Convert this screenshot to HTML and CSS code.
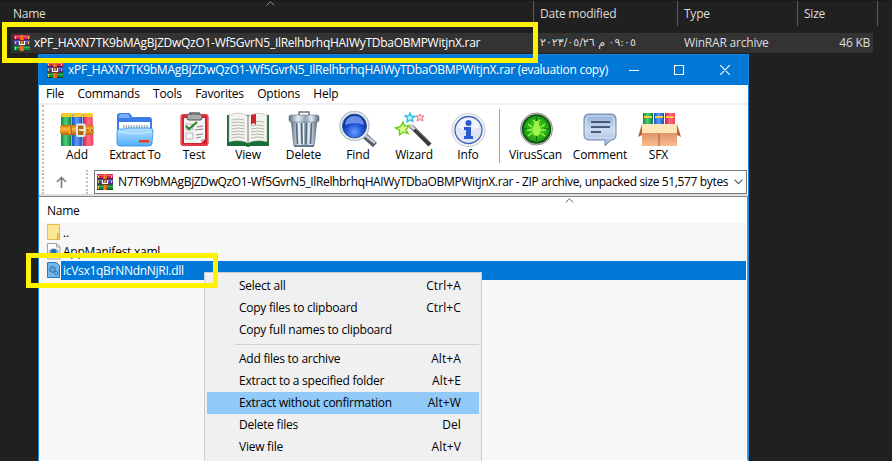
FILE: index.html
```
<!DOCTYPE html>
<html lang="en">
<head>
<meta charset="utf-8">
<title>WinRAR</title>
<link rel="stylesheet" href="styles.css">
</head>
<body>
<svg class="defs" width="0" height="0" aria-hidden="true">
  <defs>
    <linearGradient id="steel" x1="0" x2="1"><stop offset="0" stop-color="#5c7183"/><stop offset=".3" stop-color="#e9f0f5"/><stop offset=".55" stop-color="#8fa2b3"/><stop offset=".75" stop-color="#e0e8ef"/><stop offset="1" stop-color="#53677a"/></linearGradient>
    <linearGradient id="folder" x1="0" y1="0" x2="0" y2="1"><stop offset="0" stop-color="#b4e2ff"/><stop offset="1" stop-color="#51aef8"/></linearGradient>
    <linearGradient id="green" x1="0" x2="1"><stop offset="0" stop-color="#0c8a3c"/><stop offset=".45" stop-color="#4cd07a"/><stop offset="1" stop-color="#0b7f38"/></linearGradient>
    <linearGradient id="blue" x1="0" x2="1"><stop offset="0" stop-color="#1c50c8"/><stop offset=".45" stop-color="#5c9cf8"/><stop offset="1" stop-color="#1d4cc0"/></linearGradient>
    <linearGradient id="red" x1="0" x2="1"><stop offset="0" stop-color="#d81c40"/><stop offset=".5" stop-color="#ff6c88"/><stop offset="1" stop-color="#f03c60"/></linearGradient>
    <linearGradient id="leather" x1="0" y1="0" x2="0" y2="1"><stop offset="0" stop-color="#c86e08"/><stop offset=".4" stop-color="#ffb843"/><stop offset="1" stop-color="#b85c08"/></linearGradient>
    <linearGradient id="bubble" x1="0" y1="0" x2="0" y2="1"><stop offset="0" stop-color="#8eabd4"/><stop offset=".5" stop-color="#cddcf1"/><stop offset="1" stop-color="#9ab4dc"/></linearGradient>
    <linearGradient id="carton" x1="0" y1="0" x2="0" y2="1"><stop offset="0" stop-color="#d98c60"/><stop offset="1" stop-color="#f9bd90"/></linearGradient>
    <radialGradient id="lens" cy=".75"><stop offset="0" stop-color="#6b9dff"/><stop offset=".65" stop-color="#2458d8"/><stop offset="1" stop-color="#1238a8"/></radialGradient>
    <radialGradient id="radar"><stop offset="0" stop-color="#4be11c"/><stop offset="1" stop-color="#199a12"/></radialGradient>
    <symbol id="rar" viewBox="0 0 16 16">
      <path fill="#d4234f" d="M0 0h16v5H0z"/><path fill="#ec6383" d="M0 1h16v1H0z"/>
      <path fill="#4a42a0" d="M0 5h16v5H0z"/><path fill="#7870c8" d="M0 6h16v1H0z"/>
      <path fill="#138637" d="M0 10h16v6H0z"/><path fill="#3bb45b" d="M0 12h16v1H0z"/>
      <path fill="#501850" d="M0 4h16v1H0zM0 9.5h16v1H0z"/><path fill="#0b4a24" d="M0 15h16v1H0z"/>
      <path fill="#ffd23a" d="M1 2h1v2H1zM1 7h1v2H1zM1 12h1v3H1zM14 2h1v2h-1zM14 7h1v2h-1z"/>
      <path fill="#e25f16" d="M6 0h4v16H6z"/><path fill="#f58a35" d="M7 0h1v16H7z"/>
      <path fill="#7f3120" d="M5 5h6v6H5z"/><path fill="none" stroke="#fff" stroke-width="1.2" d="M5.500 6v3.500h5V6"/><path fill="#fff3c4" d="M7.500 6h1v3h-1z"/>
    </symbol>
  </defs>
</svg>

<main class="desktop">
  <section class="explorer">
    <header class="columns">
      <span class="col col-name">Name
        <svg class="sort" width="9" height="5" viewBox="0 0 9 5"><path d="M.7 4.4 4.5.8l3.8 3.6" fill="none" stroke="#9a9a9a"/></svg>
      </span>
      <span class="col">Date modified</span>
      <span class="col">Type</span>
      <span class="col">Size</span>
    </header>
    <div class="file-row">
      <span class="file"><svg class="rar" width="16" height="16"><use href="#rar"/></svg><span class="archive-name">xPF_HAXN7TK9bMAgBjZDwQzO1-Wf5GvrN5_IlRelhbrhqHAIWyTDbaOBMPWitjnX.rar</span></span>
      <span class="date"><bdo dir="ltr">٢٠٢٣/٠٥/٢٦ م ٠٩:٠٥</bdo></span>
      <span class="kind">WinRAR archive</span>
      <span class="size">46 KB</span>
    </div>
  </section>

  <section class="window">
    <header class="titlebar">
      <svg class="rar" width="16" height="16"><use href="#rar"/></svg>
      <h1 class="title">xPF_HAXN7TK9bMAgBjZDwQzO1-Wf5GvrN5_IlRelhbrhqHAIWyTDbaOBMPWitjnX.rar (evaluation copy)</h1>
      <svg class="controls" width="104" height="12" viewBox="0 0 104 12"><path d="M0 6.500h10M45.500 1.500h9v9h-9zM91.200 1.200l9.600 9.600M100.800 1.200l-9.600 9.600" fill="none" stroke="#fff" stroke-width="1.100"/></svg>
    </header>

    <nav class="menubar"><span>File</span><span>Commands</span><span>Tools</span><span>Favorites</span><span>Options</span><span>Help</span></nav>

    <div class="toolbar">
      <div class="tool"><svg width="44" height="38" viewBox="0 0 44 38">
        <path fill="url(#green)" d="M6 4h10.500v32H6z"/><path fill="url(#blue)" d="M17 4h10.500v32H17z"/><path fill="url(#red)" d="M28 4h9.500l1 31-2 1H28z"/>
        <path fill="#ffc928" d="M7 3h9l1 4H6zM18 3h9l1 4H17zM29 3h8l1 4H28z"/>
        <rect x="5" y="15" width="34" height="10" rx="3" fill="url(#leather)"/><path d="M14 13q5 7 0 14" stroke="#a45a0a" stroke-width="1" fill="#f6a830"/>
        <rect x="22" y="14.500" width="7.500" height="11.500" rx="1" fill="#b4670c" stroke="#e9edf0" stroke-width="2"/><path d="M24 20h5" stroke="#fff" stroke-width="1.600"/><path d="M32 20h1.500M36 20h1.500" stroke="#7c3e04" stroke-width="1.500"/></svg><span>Add</span></div>
      <div class="tool"><svg width="44" height="38" viewBox="0 0 44 38">
        <path fill="#3b7ce8" d="M4 6q0-3 3-3h8q3 0 4 4h17q3 0 3 3v22H4z"/><path fill="#76aff9" d="M6 6q0-2 2-2h6q2 0 3 4H6z"/>
        <path fill="#fff" d="M6 12h31v12H6z"/><path stroke="#a5b1bf" stroke-width="3" stroke-dasharray="1.400 1.200" d="M10 16.500h25"/>
        <path fill="url(#folder)" stroke="#2e8ceb" stroke-width=".8" d="M4 21q0-2 3-2h5l3-1h22q3 0 3 3l-1 12q0 3-3 3H7q-3 0-3-3z"/><path d="M6 22q15 3 33 0" stroke="#c9edff" fill="none"/><rect x="26" y="30" width="10" height="2.500" fill="#ed3e1b"/></svg><span class="tight">Extract To</span></div>
      <div class="tool"><svg width="44" height="38" viewBox="0 0 44 38">
        <rect x="8.500" y="4" width="28" height="32" rx="3" fill="#dc1f2d"/><rect x="9.500" y="5" width="26" height="30" rx="2" fill="none" stroke="#f4606c" stroke-width=".8"/><path fill="#f5f5f5" d="M12 8h21v21l-4 4H12z"/>
        <path fill="#c3c3c3" d="M33 29h-4v4z"/><rect x="15" y="4" width="15" height="6" rx="2" fill="#aaa" stroke="#555"/><path d="M18 5V3h9v2" stroke="#666" stroke-width="1.500" fill="none"/>
        <path d="M14 14h7v6h-7zM14 23h7v6h-7z" fill="none" stroke="#b6b6b6"/><path d="M14 16l3 3 8-7" stroke="#278936" stroke-width="2.300" fill="none"/><path d="M25 17l6-1M23 20l8-1M24 25l7-1M24 28l5-1" stroke="#868686"/></svg><span>Test</span></div>
      <div class="tool"><svg width="44" height="38" viewBox="0 0 44 38">
        <path fill="#176e36" d="M1 5h42v31H25l-3 1-3-1H1z"/><path fill="#f4f3ee" stroke="#9a9c91" stroke-width=".5" d="M3 5q10-4 19 1v27q-9-4-19-1zM41 5q-10-4-19 1v27q9-4 19-1z"/>
        <path d="M22 6v27" stroke="#b7b5ad" stroke-width="2"/><path d="M5.500 10q7-2 13 0M5.500 13q7-2 13 0M5.500 16q7-2 13 0M5.500 19q7-2 13 0M5.500 22q7-2 13 0M5.500 25q7-2 13 0M5.500 28q7-2 13 0M25 13q7-3 13-1M25 16q7-2 13 0M25 19q7-2 13 0M25 22q7-2 13 0M25 25q7-2 13 0M25 28q7-2 13 0" stroke="#a5a5a0" stroke-width=".8" fill="none"/><path fill="#cd2430" d="M25 5l5-1v11l-2.500-2-2.500 2z"/></svg><span>View</span></div>
      <div class="tool"><svg width="44" height="38" viewBox="0 0 44 38">
        <path d="M17 5V2h10v3" fill="none" stroke="#667888" stroke-width="1.500"/><path fill="url(#steel)" d="M9 12h26l-2 21q0 4-4 4H15q-4 0-4-4z"/>
        <path d="M14.500 13l1 21M19.500 13l.500 21M24.500 13l-.500 21M29.500 13l-1 21" stroke="#52677b" stroke-width="1.600"/><path d="M16.500 13l1 21M21.500 13v21M26.500 13l-.500 21" stroke="#e9f0f6" stroke-width="1"/>
        <rect x="7" y="5" width="30" height="7" rx="2" fill="url(#steel)" stroke="#627689" stroke-width=".6"/><path d="M12 36h20" stroke="#66798b" stroke-width="2"/></svg><span>Delete</span></div>
      <div class="tool"><svg width="44" height="38" viewBox="0 0 44 38">
        <path d="M29 26l10 9" stroke="#5a6068" stroke-width="6"/><path d="M29 25l10 8" stroke="#c5cbd1" stroke-width="2.500"/>
        <circle cx="18.500" cy="16" r="14.500" fill="#eef2f6" stroke="#b9c6d3" stroke-width="1.500"/><circle cx="18.500" cy="16" r="12" fill="url(#lens)" stroke="#31558f"/><path fill="#86aafa" opacity=".75" d="M9 15q1-9 9.500-9T28 15q-9-4-19 0z"/></svg><span>Find</span></div>
      <div class="tool"><svg width="44" height="38" viewBox="0 0 44 38">
        <path d="M19 16l19 19" stroke="#3a3a3a" stroke-width="4.500"/><path d="M20 15l19 18" stroke="#999" stroke-width="1"/><path d="M18.500 15.500l4 4" stroke="#d7d7d7" stroke-width="3"/>
        <path d="M11 12l1.500 4 5-.500-3.500 4 2 4-4.500-1.500-4 3v-5l-4-2 5-1.500z" fill="#d8ff94" stroke="#78ce25" stroke-width="1.500"/><path d="M18 3l1 3 4 .500-3 2 1 3-3-1.500-3 2 .500-4-2.500-2 4-.500z" fill="#baf8ff" stroke="#2cbce2" stroke-width="1.300"/><path d="M28 4l1 2h3l-2 2 1 3-3-1.500-3 1.500 1-3-2-2h3z" fill="#ffd7d7" stroke="#ed7a80"/></svg><span>Wizard</span></div>
      <div class="tool"><svg width="44" height="38" viewBox="0 0 44 38">
        <circle cx="22.500" cy="20" r="16.500" fill="#f5f5f5" stroke="#c8c8cc"/><circle cx="22.500" cy="20" r="13.500" fill="#dfe5f4" stroke="#3b62be" stroke-width="1.300"/><path d="M11 17q3-9 11.500-9T34 17q-12 5-23 0z" fill="#f1f3fa"/>
        <circle cx="22.500" cy="13" r="3" fill="#2c5bd0"/><path fill="#2c5bd0" d="M18 17h7v9h2v3h-9v-3h2v-6h-2z"/></svg><span>Info</span></div>
      <i class="tool-divider"></i>
      <div class="tool"><svg width="44" height="38" viewBox="0 0 44 38">
        <circle cx="22.500" cy="19" r="16" fill="#ddd" stroke="#8e8e8e"/><circle cx="22.500" cy="19" r="13.800" fill="url(#radar)" stroke="#135114" stroke-width="1.800"/><path d="M22.500 7v5M22.500 26v5M10 19h5M30 19h5" stroke="#156516"/>
        <ellipse cx="22.500" cy="20" rx="4.200" ry="6" fill="#a4f34b"/><circle cx="22.500" cy="13.500" r="2.500" fill="#a4f34b"/><path d="M18 17l-4-3M18 20h-5M18 23l-4 3M27 17l4-3M27 20h5M27 23l4 3M21 12l-2-2M24 12l2-2" stroke="#a4f34b" stroke-width="1.300"/></svg><span>VirusScan</span></div>
      <div class="tool"><svg width="44" height="38" viewBox="0 0 44 38">
        <path d="M11 4h22q5 0 5 5v16q0 5-5 5l-6 6v-6H11q-5 0-5-5V9q0-5 5-5z" fill="url(#bubble)" stroke="#718bae"/><rect x="8" y="6" width="28" height="22" rx="4" fill="none" stroke="#d8e5f6"/><path d="M13 12h19M13 17h19M13 22h10" stroke="#26344b" stroke-width="1.600"/></svg><span>Comment</span></div>
      <div class="tool"><svg width="44" height="38" viewBox="0 0 44 38">
        <path fill="url(#green)" d="M6 3h10v14H6z"/><path fill="url(#blue)" d="M17 3h10v14H17z"/><path fill="url(#red)" d="M28 3h10v14H28z"/><path stroke="#ffce2e" stroke-width="2" d="M7 7h8M18 7h8M29 7h8"/>
        <path fill="url(#carton)" d="M5 21h35v15H5z"/><path fill="#b2683f" d="M5 14v11l-4 2zM40 14v11l4 2z"/><path fill="#ffe6b8" d="M5 14h35v9H5z"/><path d="M22 24v12" stroke="#a75e35"/></svg><span>SFX</span></div>
    </div>

    <div class="address-row">
      <span class="up"><svg width="11" height="12" viewBox="0 0 11 12"><path d="M5.500 12V1.500M1 6l4.500-4.500L10 6" fill="none" stroke="#808080" stroke-width="1.700"/></svg></span>
      <i class="grip"></i>
      <div class="address">
        <svg class="rar" width="16" height="16"><use href="#rar"/></svg>
        <span class="path">N7TK9bMAgBjZDwQzO1-Wf5GvrN5_IlRelhbrhqHAIWyTDbaOBMPWitjnX.rar - ZIP archive, unpacked size 51,577 bytes</span>
        <svg class="chevron" width="9" height="6" viewBox="0 0 9 6"><path d="M.5.700l4 4 4-4" fill="none" stroke="#555" stroke-width="1.100"/></svg>
      </div>
    </div>

    <div class="list">
      <div class="list-head"><span>Name</span><svg class="list-sort" width="9" height="5" viewBox="0 0 9 5"><path d="M.7 4.400 4.500.8l3.800 3.600" fill="none" stroke="#666"/></svg></div>
      <div class="entries">
        <div class="entry"><svg width="14" height="17" viewBox="0 0 14 17"><path fill="#ffe596" stroke="#e6bd4e" d="M.5.500h12v15H.5z"/><path fill="#fbd568" stroke="#dcae3d" d="M10.500 9.500h2v6h-2z"/></svg><span class="label">..</span></div>
        <div class="entry"><svg width="14" height="17" viewBox="0 0 14 17"><path fill="#fbfbfb" stroke="#a2a2a2" d="M.5.500h9l3.500 3.500v12H.5z"/><path d="M9.500.500V4H13" fill="none" stroke="#a2a2a2"/><ellipse cx="6.700" cy="9" rx="5" ry="3.500" fill="#92a8bc"/><circle cx="6.700" cy="8.500" r="2.600" fill="#1670bd"/></svg><span class="label manifest">AppManifest.xaml</span></div>
        <div class="entry selected"><svg width="14" height="17" viewBox="0 0 14 17"><path fill="#71b5ed" stroke="#2b78b7" d="M.5.500h9l3 3v12H.5z"/><circle cx="5.500" cy="7.500" r="2.600" fill="none" stroke="#347eb5" stroke-width="1.300"/><circle cx="5.500" cy="7.500" r=".7" fill="#347eb5"/><circle cx="9" cy="11" r="1.800" fill="none" stroke="#347eb5"/></svg><span class="label dll">icVsx1qBrNNdnNjRI.dll</span></div>
      </div>
    </div>
  </section>

  <div class="context-menu">
    <div class="item"><span>Select all</span><span class="key">Ctrl+A</span></div>
    <div class="item"><span>Copy files to clipboard</span><span class="key">Ctrl+C</span></div>
    <div class="item"><span>Copy full names to clipboard</span></div>
    <hr class="separator">
    <div class="item"><span>Add files to archive</span><span class="key">Alt+A</span></div>
    <div class="item"><span>Extract to a specified folder</span><span class="key">Alt+E</span></div>
    <div class="item active"><span>Extract without confirmation</span><span class="key">Alt+W</span></div>
    <div class="item"><span>Delete files</span><span class="key">Del</span></div>
    <div class="item"><span>View file</span><span class="key">Alt+V</span></div>
  </div>

  <div class="highlight highlight-archive"></div>
  <div class="highlight highlight-dll"></div>
</main>
</body>
</html>
```
FILE: styles.css
```
* { box-sizing: border-box; }
body { margin: 0; background: #202020; font: 12px/16px "Open Sans", "Noto Sans", "DejaVu Sans", sans-serif; letter-spacing: -.25px; color: #000; white-space: nowrap; }
svg { flex: none; display: block; }
.defs { position: absolute; }
.desktop { position: relative; width: 892px; height: 461px; overflow: hidden; }

.explorer { height: 54px; border-top: 1px solid #191919; color: #dedede; }
.columns { display: grid; grid-template-columns: 534px 144px 120px 80px; height: 25px; letter-spacing: -.24px; }
.col { border-right: 1px solid #5c5c5c; padding: 5px 0 0 6px; }
.col-name { position: relative; padding-left: 13px; }
.sort { position: absolute; left: 266px; top: 0; }
.file-row { display: grid; grid-template-columns: 523px 144px 120px 75px; align-items: center; width: 862px; height: 20px; margin: 7px 0 0 11px; background: #333; }
.file { display: flex; align-items: center; gap: 4px; padding-left: 3px; color: #fff; }
.archive-name { letter-spacing: -.28px; }
.date { padding-left: 6px; font-family: "DejaVu Sans", sans-serif; font-size: 11px; letter-spacing: 0; }
.kind { padding-left: 6px; letter-spacing: -.2px; }
.size { padding-right: 3px; text-align: right; }

.window { position: relative; width: 711px; height: 407px; margin-left: 38px; border: solid #1883d7; border-width: 1px 1px 0; background: #fff; }
.titlebar { display: flex; align-items: center; height: 30px; padding-left: 8px; background: #0078d7; color: #fff; }
.title { width: 561px; margin: 0 0 0 5px; font: inherit; letter-spacing: -.27px; }
.menubar { display: flex; gap: 13.4px; height: 20px; padding: 1px 7px 0; border-bottom: 2px solid #f0f0f0; letter-spacing: -.23px; }
.toolbar { display: grid; grid-template-columns: 58px 58px 60px 48px 63px 46px 66px 42px 16px 61px 68px 49px; height: 63px; margin-left: 3px; padding: 5px 0 0 4px; border-left: 2px dotted #c0c0c0; letter-spacing: -.15px; }
.tool { display: flex; flex-direction: column; align-items: center; }
.tool span { margin-top: -1px; }
.tool .tight { letter-spacing: -.45px; }
.tool svg { margin: 0 -12px; }
.tool-divider { width: 1px; height: 54px; margin: -1px 0 0 10px; background: #a0a0a0; }
.address-row { display: flex; height: 28px; padding: 2px 0 0 3px; border-bottom: 2px solid #e0e0e0; }
.up { width: 44px; padding: 6px 0 0 12px; border-left: 2px dotted #c0c0c0; }
.grip { width: 8px; border-left: 2px dotted #c0c0c0; }
.address { display: flex; align-items: center; width: 653px; height: 24px; padding-left: 2px; border: 1px solid #7a7a7a; }
.path { width: 611px; margin-left: 5px; letter-spacing: -.358px; }
.chevron { margin-left: 5px; }

.list { height: 264px; border: solid #828790; border-width: 1px 1px 0 0; padding: 0 1px; }
.list-head { position: relative; height: 26px; padding: 6px 7px; }
.list-sort { position: absolute; left: 525px; top: 1px; }
.entries { height: 237px; background: #f7f7f7; margin-left: 1px; }
.entry { display: flex; align-items: center; height: 19px; padding-left: 6px; }
.label { flex: 1; height: 19px; line-height: 19px; padding-left: 2px; }
.selected .label { background: #0078d7; color: #fff; }
.dll { letter-spacing: -.29px; }

.context-menu { position: absolute; left: 204px; top: 272px; width: 278px; height: 200px; padding: 2px; border: 1px solid #ccc; background: #f0f0f0; }
.item { display: flex; justify-content: space-between; height: 22px; padding: 3px 18px 3px 32px; }
.key { letter-spacing: .1px; }
.active { background: #91c9f7; }
.separator { height: 1px; margin: 3px 0 3px 28px; border: 0; background: #d0d0d0; }

.highlight { position: absolute; border: 5px solid #fff200; }
.highlight-archive { left: 2px; top: 22px; width: 536px; height: 41px; }
.highlight-dll { left: 26px; top: 253px; width: 192px; height: 35px; }
```
